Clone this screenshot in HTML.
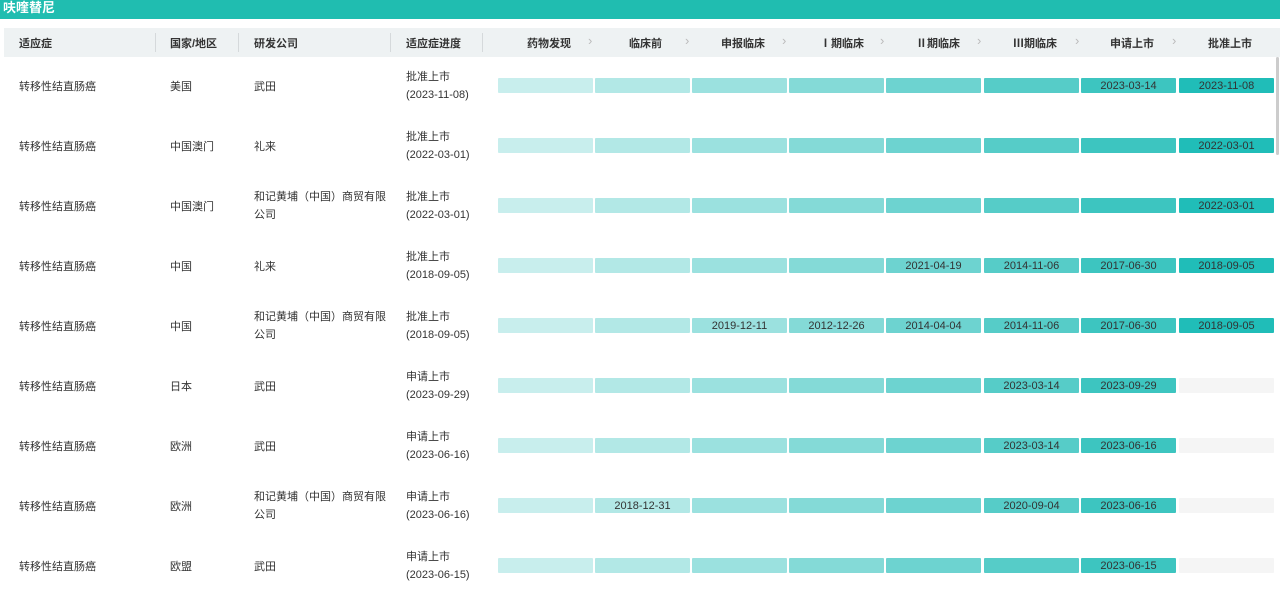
<!DOCTYPE html><html><head><meta charset="utf-8"><style>
body{margin:0;width:1280px;height:589px;overflow:hidden;background:#fff;font-family:"Liberation Sans","Noto Sans CJK SC",sans-serif;font-size:11px;color:#333;position:relative}
.t{position:absolute;left:0;top:0;width:1280px;height:19px;background:#20bdb0;color:#fff;font-weight:bold;font-size:13px;line-height:15px;padding-left:3px;box-sizing:border-box}
.h{position:absolute;left:4px;top:28px;width:1276px;height:29px;background:#eef2f3;font-weight:bold;font-size:11px;color:#333}
.h span{position:absolute;top:7px}
.sep{position:absolute;top:5px;width:1px;height:19px;background:#d5d9db}
.h span.ar{top:5px;color:#bbb;font-size:13px;font-weight:normal}
.r{position:absolute;left:0;width:1280px;height:60px}
.r span{position:absolute}
.b{position:absolute;height:15px;top:18px;width:95px;border-radius:1px;text-align:center;line-height:17px;font-size:11px;color:#333}
.sb{position:absolute;left:1276px;top:57px;width:3px;height:98px;background:#ccc;border-radius:2px}
</style></head><body>
<div class="t">呋喹替尼</div>
<div class="h">
<span style="left:15px">适应症</span><div class="sep" style="left:151px"></div>
<span style="left:166px">国家/地区</span><div class="sep" style="left:234px"></div>
<span style="left:250px">研发公司</span><div class="sep" style="left:386px"></div>
<span style="left:402px">适应症进度</span><div class="sep" style="left:478px"></div>
<span style="left:523px">药物发现</span><span class="ar" style="left:584px">›</span>
<span style="left:625px">临床前</span><span class="ar" style="left:681px">›</span>
<span style="left:717px">申报临床</span><span class="ar" style="left:778px">›</span>
<span style="left:816px">Ⅰ期临床</span><span class="ar" style="left:876px">›</span>
<span style="left:912px">Ⅱ期临床</span><span class="ar" style="left:973px">›</span>
<span style="left:1009px">Ⅲ期临床</span><span class="ar" style="left:1071px">›</span>
<span style="left:1106px">申请上市</span><span class="ar" style="left:1168px">›</span>
<span style="left:1204px">批准上市</span>
</div>
<div class="sb"></div>
<div id="rows"></div>
<script>
var C=["#c8eeed","#b2e8e6","#9be1df","#84dad7","#6dd3d0","#56ccc8","#3dc5c0","#20bdb8"];
var X=[498,595,692,789,886,984,1081,1179];
var R=[
["美国","武田","批准上市","(2023-11-08)",8,{6:"2023-03-14",7:"2023-11-08"}],
["中国澳门","礼来","批准上市","(2022-03-01)",8,{7:"2022-03-01"}],
["中国澳门","和记黄埔（中国）商贸有限|公司","批准上市","(2022-03-01)",8,{7:"2022-03-01"}],
["中国","礼来","批准上市","(2018-09-05)",8,{4:"2021-04-19",5:"2014-11-06",6:"2017-06-30",7:"2018-09-05"}],
["中国","和记黄埔（中国）商贸有限|公司","批准上市","(2018-09-05)",8,{2:"2019-12-11",3:"2012-12-26",4:"2014-04-04",5:"2014-11-06",6:"2017-06-30",7:"2018-09-05"}],
["日本","武田","申请上市","(2023-09-29)",7,{5:"2023-03-14",6:"2023-09-29"}],
["欧洲","武田","申请上市","(2023-06-16)",7,{5:"2023-03-14",6:"2023-06-16"}],
["欧洲","和记黄埔（中国）商贸有限|公司","申请上市","(2023-06-16)",7,{1:"2018-12-31",5:"2020-09-04",6:"2023-06-16"}],
["欧盟","武田","申请上市","(2023-06-15)",7,{6:"2023-06-15"}]];
var h="";
R.forEach(function(r,i){
var top=60+i*60;h+='<div class="r" style="top:'+top+'px">';
h+='<span style="left:19px;top:18px">转移性结直肠癌</span><span style="left:170px;top:18px">'+r[0]+'</span>';
var co=r[1].split("|");
if(co.length>1)h+='<span style="left:254px;top:8px;line-height:18px">'+co[0]+'<br>'+co[1]+'</span>';else h+='<span style="left:254px;top:18px">'+co[0]+'</span>';
h+='<span style="left:406px;top:8px;line-height:18px">'+r[2]+'<br>'+r[3]+'</span>';
for(var k=0;k<8;k++){var bg=k<r[4]?C[k]:"#f5f5f5";h+='<div class="b" style="left:'+X[k]+'px;background:'+bg+'">'+(r[5][k]||"")+'</div>';}
h+='</div>';});
document.getElementById("rows").innerHTML=h;
</script>
</body></html>
